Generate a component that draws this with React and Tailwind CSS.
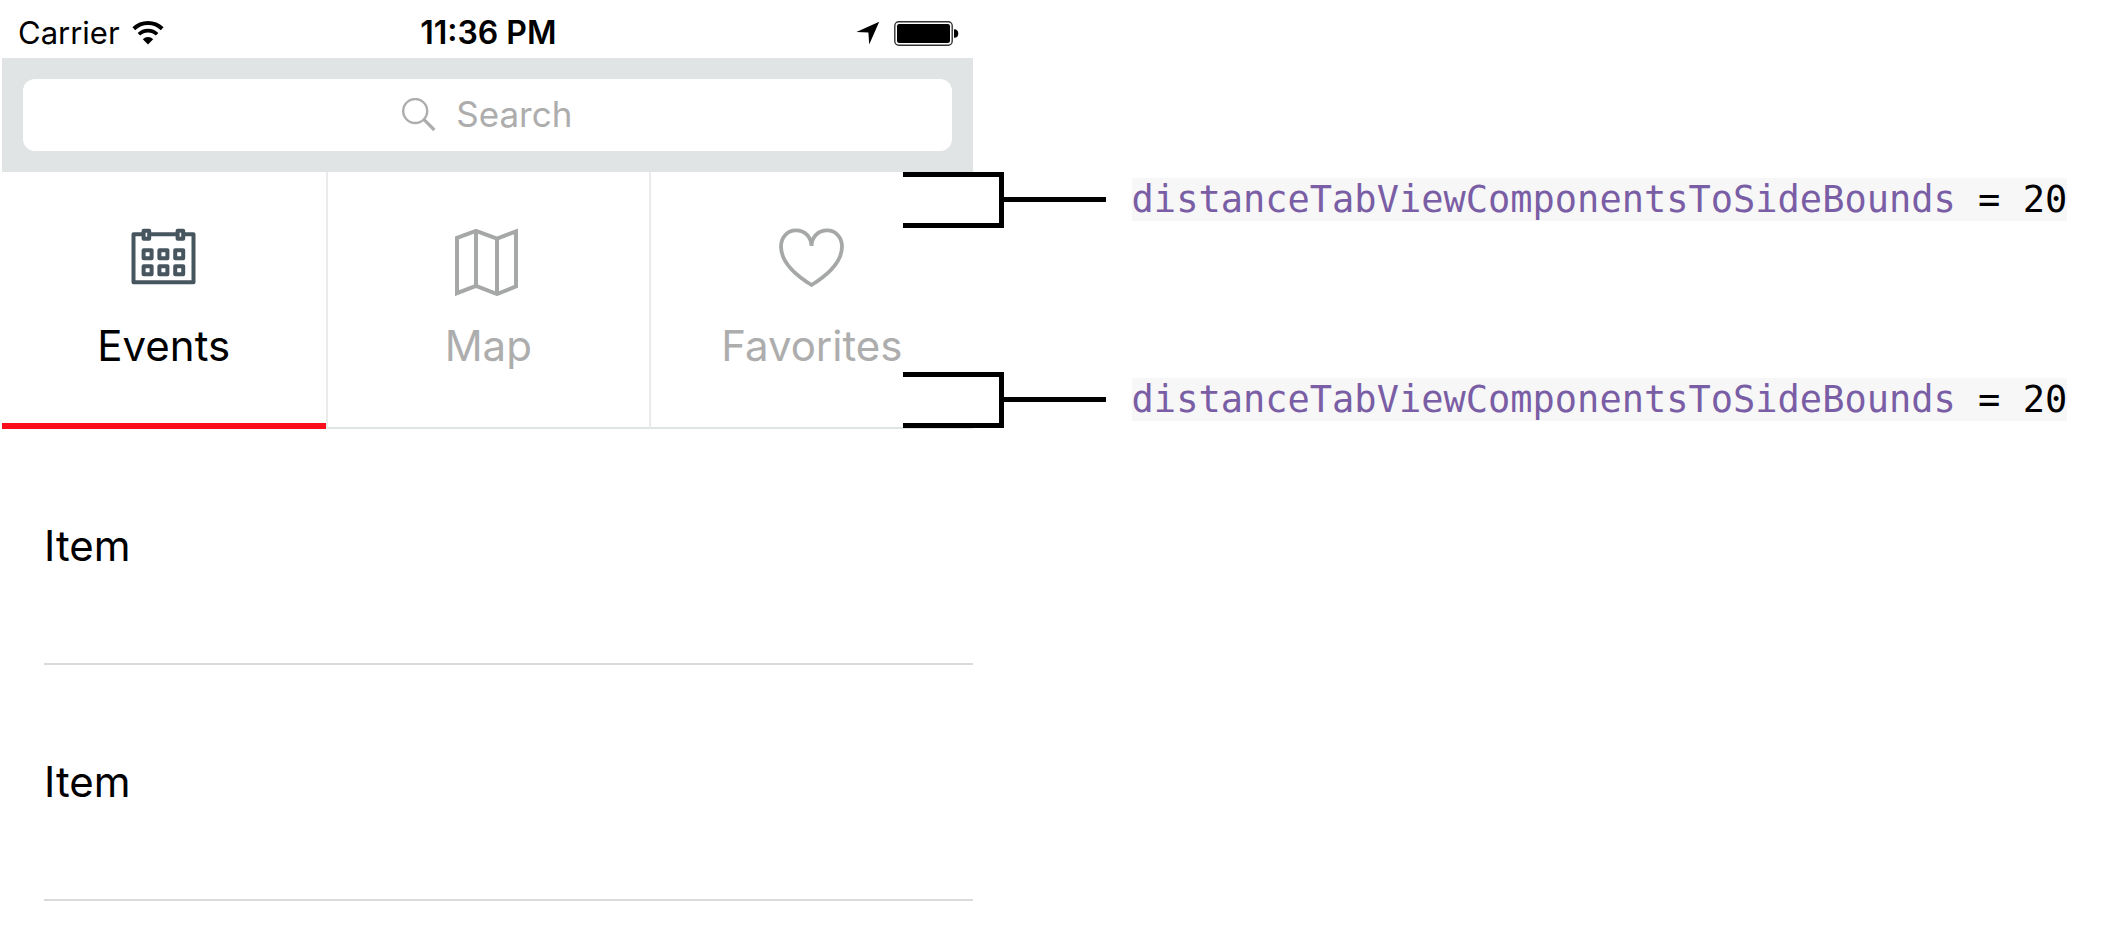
function WifiIcon() {
  return (
    <svg className="h-6 w-8" viewBox="0 0 32 24" aria-hidden="true">
      <path d="M1.8 7.8 A20.5 20.5 0 0 1 30.2 7.8" fill="none" stroke="#000" strokeWidth="4" />
      <path d="M6.9 13.3 A13 13 0 0 1 25.1 13.3" fill="none" stroke="#000" strokeWidth="3.6" />
      <path d="M10.8 18.2 A7.4 7.4 0 0 1 21.2 18.2 L16 23.6 Z" fill="#000" />
    </svg>
  );
}

function LocationIcon() {
  return (
    <svg className="h-6 w-6" viewBox="0 0 24 24" aria-hidden="true">
      <path d="M23.2 0.8 L13.2 23.6 L12.4 11.6 L0.4 11 Z" fill="#000" />
    </svg>
  );
}

function BatteryIcon() {
  return (
    <svg className="h-[25px] w-[65px]" viewBox="0 0 65 25" aria-hidden="true">
      <rect x="0.8" y="0.8" width="57.4" height="23.4" rx="4" fill="none" stroke="#333" strokeWidth="1.4" />
      <rect x="3" y="3" width="53" height="19" rx="2.2" fill="#000" />
      <path d="M60 8.2 C63 8.2 64.3 9.8 64.3 12.5 C64.3 15.2 63 16.8 60 16.8 Z" fill="#000" />
    </svg>
  );
}

function SearchIcon() {
  return (
    <svg className="h-[34px] w-[34px]" viewBox="0 0 34 34" fill="none" stroke="#adadad" aria-hidden="true">
      <circle cx="13.2" cy="13" r="12" strokeWidth="2.4" />
      <path d="M21.8 21.4 L32.4 32" strokeWidth="3.2" />
    </svg>
  );
}

function CalendarIcon() {
  return (
    <svg className="h-[68px] w-[65px]" viewBox="0 0 65 68" fill="none" stroke="#47565e" strokeWidth="4" strokeLinejoin="round" aria-hidden="true">
      <rect x="2.5" y="6.3" width="60" height="48" />
      {[12.6, 46.6].map((x) => (
        <rect key={x} x={x} y="2.7" width="5.6" height="8" fill="#fff" />
      ))}
      {[22.3, 38.2].map((y) =>
        [12.6, 28.4, 44.2].map((x) => <rect key={`${x}-${y}`} x={x} y={y} width="8" height="8" />)
      )}
    </svg>
  );
}

function MapIcon() {
  return (
    <svg className="h-[68px] w-[66px]" viewBox="0 0 66 68" fill="none" stroke="#a6a8a8" strokeWidth="4" aria-hidden="true">
      <path d="M2 9.8 L21 2.8 L42 10.6 L61 3.4 V58.4 L42 66 L21 57.8 L2 65.2 Z" />
      <path d="M21 2.8 V57.8 M42 10.6 V66" />
    </svg>
  );
}

function HeartIcon() {
  return (
    <svg className="h-[68px] w-[65px]" viewBox="0 0 65 68" fill="none" stroke="#a6a8a8" strokeWidth="3.8" aria-hidden="true">
      <path d="M32.5 18 C32.3 9 26 2.4 17 2.4 C8 2.4 2 9.8 2 18.6 C2 33 15.5 46.5 32.5 57 C49.5 46.5 63 33 63 18.6 C63 9.8 57 2.4 48 2.4 C39 2.4 32.7 9 32.5 18 Z" />
    </svg>
  );
}

const tabs = [
  { name: "Events", Icon: CalendarIcon, style: "border-b-6 border-b-[#fc0d1b] text-black" },
  { name: "Map", Icon: MapIcon, style: "border-b-2 border-l-2 border-b-[#dfe4e4] border-l-[#eaecec] text-[#adadad]" },
  { name: "Favorites", Icon: HeartIcon, style: "border-b-2 border-l-2 border-b-[#dfe4e4] border-l-[#eaecec] text-[#adadad]" },
];

function Phone() {
  return (
    <section className="ml-0.5 w-[46%] shrink-0">
      <header className="grid h-[58px] grid-cols-3 items-center pt-2 pr-3.5 pl-4 text-[31px] leading-9">
        <div className="flex items-center gap-3">
          <span>Carrier</span>
          <WifiIcon />
        </div>
        <time className="text-center text-[32px] font-semibold">11:36 PM</time>
        <div className="flex items-center justify-end gap-3.5">
          <LocationIcon />
          <BatteryIcon />
        </div>
      </header>

      <div className="bg-[#e0e4e4] px-[21px] py-[21px]">
        <label className="flex h-[72px] items-center justify-center gap-5 rounded-xl bg-white">
          <SearchIcon />
          <input
            type="search"
            aria-label="Search"
            placeholder="Search"
            className="field-sizing-content pb-0.5 text-[35px] leading-10 outline-none placeholder:text-[#adadad]"
          />
        </label>
      </div>

      <nav className="grid grid-cols-3">
        {tabs.map(({ name, Icon, style }) => (
          <button key={name} type="button" className={`flex h-[257px] flex-col items-center gap-[26px] pt-14 ${style}`}>
            <Icon />
            <span className="text-[42px] leading-12">{name}</span>
          </button>
        ))}
      </nav>

      <ul className="pl-[42px]">
        {[1, 2].map((id) => (
          <li key={id} className="flex h-[236px] items-center border-b-2 border-[#dadada] text-[42px] leading-12">
            Item
          </li>
        ))}
      </ul>
    </section>
  );
}

function Annotation() {
  return (
    <div className="flex h-14 items-start">
      <div className="h-14 w-[101px] shrink-0 border-5 border-l-0 border-black" />
      <div className="mt-[25px] h-[5px] w-[102px] shrink-0 bg-black" />
      <code className="mt-1.5 ml-[26px] bg-[#f7f7f7] font-['DejaVu_Sans_Mono',monospace] text-[37px] leading-[43px] whitespace-nowrap text-[#7a5ea5]">
        distanceTabViewComponentsToSideBounds<span className="text-black"> = 20</span>
      </code>
    </div>
  );
}

export default function App() {
  return (
    <main className="flex min-h-screen bg-white font-['Inter',sans-serif] text-black">
      <Phone />
      <aside className="relative -ml-[70px] flex flex-col gap-36 pt-[172px]">
        <Annotation />
        <Annotation />
      </aside>
    </main>
  );
}
